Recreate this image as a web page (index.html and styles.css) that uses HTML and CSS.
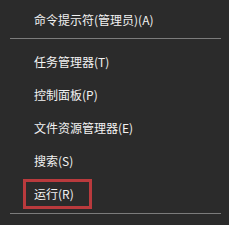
FILE: index.html
```html
<!DOCTYPE html>
<html lang="zh-CN">
<head>
  <meta charset="UTF-8" />
  <title>菜单</title>
  <link rel="stylesheet" href="styles.css">
</head>
<body>
  <div class="menu">
    <div class="item">命令提示符(管理员)(A)</div>
    <div class="sep"></div>
    <div class="item">任务管理器(T)</div>
    <div class="item">控制面板(P)</div>
    <div class="item">文件资源管理器(E)</div>
    <div class="item">搜索(S)</div>
    <div class="item marked"><span>运行(R)</span></div>
    <div class="sep bottom"></div>
  </div>
</body>
</html>
```
FILE: styles.css
```css
body {
  margin: 0;
  background: #2b2b2b;
  font-family: "Microsoft YaHei", "Noto Sans CJK SC", "Noto Sans", sans-serif;
  font-size: 12px;
  color: #f2f2f2;
}

.menu {
  width: 229px;
  height: 225px;
  padding-top: 3px;
  box-sizing: border-box;
}

.item {
  height: 33px;
  display: flex;
  align-items: center;
  padding-left: 34px;
  line-height: 16px;
}

.sep {
  height: 1px;
  background: #7c7c7c;
  margin: 2px 8px 6px 10px;
}

.sep.bottom {
  margin-top: 3px;
}

.item.marked span {
  border: 3px solid #b93a3d;
  padding: 4px 15px 4px 8px;
  margin-left: -11px;
}
```
